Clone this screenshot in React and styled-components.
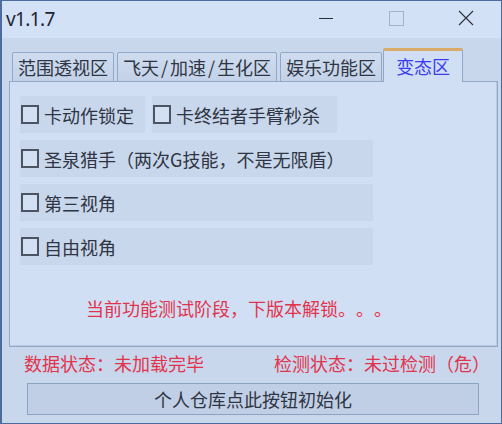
import React from "react";
import styled, { createGlobalStyle } from "styled-components";

const Global = createGlobalStyle`
  html, body { margin: 0; padding: 0; background: #c8d7ec; }
  * { box-sizing: border-box; }
`;

const CJK = `"Noto Sans CJK SC", "Noto Sans", sans-serif`;

const Window = styled.div`
  width: 502px;
  height: 424px;
  border: 1px solid #4d6c9c;
  border-left-width: 2px;
  background: #c8d7ec;
  display: flex;
  flex-direction: column;
  font-family: ${CJK};
  color: #2f3542;
  overflow: hidden;
  text-spacing-trim: space-all;
`;

const TitleBar = styled.div`
  height: 37px;
  flex: none;
  background: #d3e1f6;
  display: flex;
  align-items: center;
  padding-left: 4px;
`;

const Title = styled.div`
  font-family: "Noto Sans", sans-serif;
  font-size: 19px;
  letter-spacing: -0.6px;
  color: #1e2430;
  flex: 1;
  margin-top: -1px;
`;

const Controls = styled.div`
  display: flex;
  align-items: center;
  height: 100%;
`;

const CtrlBtn = styled.div`
  width: 70px;
  height: 100%;
  display: flex;
  align-items: center;
  justify-content: center;
  margin-top: -3px;
`;

const Main = styled.div`
  flex: 1;
  display: flex;
  flex-direction: column;
  padding: 10px 3px 0 7px;
`;

const TabBar = styled.div`
  display: flex;
  align-items: flex-end;
  gap: 3px;
  height: 34px;
  margin-left: 3px;
  margin-bottom: -1px;
  position: relative;
  z-index: 1;
`;

const Tab = styled.div`
  height: ${(p) => (p.$active ? 34 : 30)}px;
  padding: 0 ${(p) => (p.$active ? 12 : 5)}px;
  margin-left: ${(p) => (p.$active ? -2 : 0)}px;
  display: flex;
  align-items: center;
  font-size: 18px;
  line-height: 22px;
  white-space: nowrap;
  color: ${(p) => (p.$active ? "#3b3cf2" : "#2f3542")};
  background: ${(p) =>
    p.$active ? "#d1dff4" : "linear-gradient(#cfdcf0, #c3d2e8)"};
  border: 1px solid #93a8c6;
  border-bottom: ${(p) => (p.$active ? "none" : "1px solid #93a8c6")};
  border-top: ${(p) => (p.$active ? "3px solid #d8ac68" : "1px solid #93a8c6")};
  border-radius: 2px 2px 0 0;
  padding-bottom: ${(p) => (p.$active ? 2 : 0)}px;
`;

const Slash = styled.span`
  margin: 0 2px;
`;

const Panel = styled.div`
  height: 266px;
  flex: none;
  background: #d1dff4;
  border: 1px solid #93a8c6;
  box-shadow: inset -1px -1px 0 #b9c9e0;
  padding: 14px 0 0 10px;
  display: flex;
  flex-direction: column;
`;

const Rows = styled.div`
  display: flex;
  flex-direction: column;
  gap: 7px;
`;

const Row = styled.div`
  display: flex;
  gap: 7px;
`;

const Item = styled.div`
  width: ${(p) => p.$w}px;
  height: 37px;
  background: #c8d7ec;
  display: flex;
  align-items: center;
  padding-left: 1px;
  font-size: 18px;
  line-height: 22px;
  color: #2f3542;
  white-space: nowrap;
`;

const Box = styled.span`
  display: block;
  width: 18px;
  height: 19px;
  border: 2px solid #4c5361;
  background: #d3e0f4;
  margin-right: 5px;
  flex: none;
`;

const Note = styled.div`
  margin-top: 32px;
  padding-left: 66px;
  font-size: 18px;
  line-height: 22px;
  color: #e2334c;
  white-space: nowrap;
`;

const Status = styled.div`
  display: flex;
  justify-content: space-between;
  padding: 0 8px 0 15px;
  margin-top: 5px;
  font-size: 18px;
  line-height: 22px;
  color: #e2334c;
  white-space: nowrap;
`;

const Button = styled.div`
  margin: 9px 0 0 18px;
  width: 452px;
  height: 32px;
  background: #c0cfe6;
  border: 1px solid #8da3c2;
  display: flex;
  align-items: center;
  justify-content: center;
  font-size: 18px;
  line-height: 22px;
  color: #2f3542;
`;

const Check = ({ w, children }) => (
  <Item $w={w}>
    <Box />
    {children}
  </Item>
);

export default function App() {
  return (
    <>
      <Global />
      <Window>
        <TitleBar>
          <Title>v1.1.7</Title>
          <Controls>
            <CtrlBtn>
              <svg width="16" height="16" viewBox="0 0 16 16">
                <line x1="1" y1="8.5" x2="15" y2="8.5" stroke="#2a2f3a" strokeWidth="1" />
              </svg>
            </CtrlBtn>
            <CtrlBtn>
              <svg width="16" height="16" viewBox="0 0 16 16">
                <rect x="1.5" y="1.5" width="14" height="14" fill="none" stroke="#a6b3c6" strokeWidth="1" />
              </svg>
            </CtrlBtn>
            <CtrlBtn>
              <svg width="16" height="16" viewBox="0 0 16 16">
                <path d="M1 1 L15 15 M15 1 L1 15" stroke="#2a2f3a" strokeWidth="1.1" />
              </svg>
            </CtrlBtn>
          </Controls>
        </TitleBar>
        <Main>
          <TabBar>
            <Tab>范围透视区</Tab>
            <Tab>
              飞天<Slash>/</Slash>加速<Slash>/</Slash>生化区
            </Tab>
            <Tab>娱乐功能区</Tab>
            <Tab $active>变态区</Tab>
          </TabBar>
          <Panel>
            <Rows>
              <Row>
                <Check w={125}>卡动作锁定</Check>
                <Check w={185}>卡终结者手臂秒杀</Check>
              </Row>
              <Check w={353}>圣泉猎手（两次G技能，不是无限盾）</Check>
              <Check w={353}>第三视角</Check>
              <Check w={353}>自由视角</Check>
            </Rows>
            <Note>当前功能测试阶段，下版本解锁。。。</Note>
          </Panel>
          <Status>
            <span>数据状态：未加载完毕</span>
            <span>检测状态：未过检测（危）</span>
          </Status>
          <Button>个人仓库点此按钮初始化</Button>
        </Main>
      </Window>
    </>
  );
}
